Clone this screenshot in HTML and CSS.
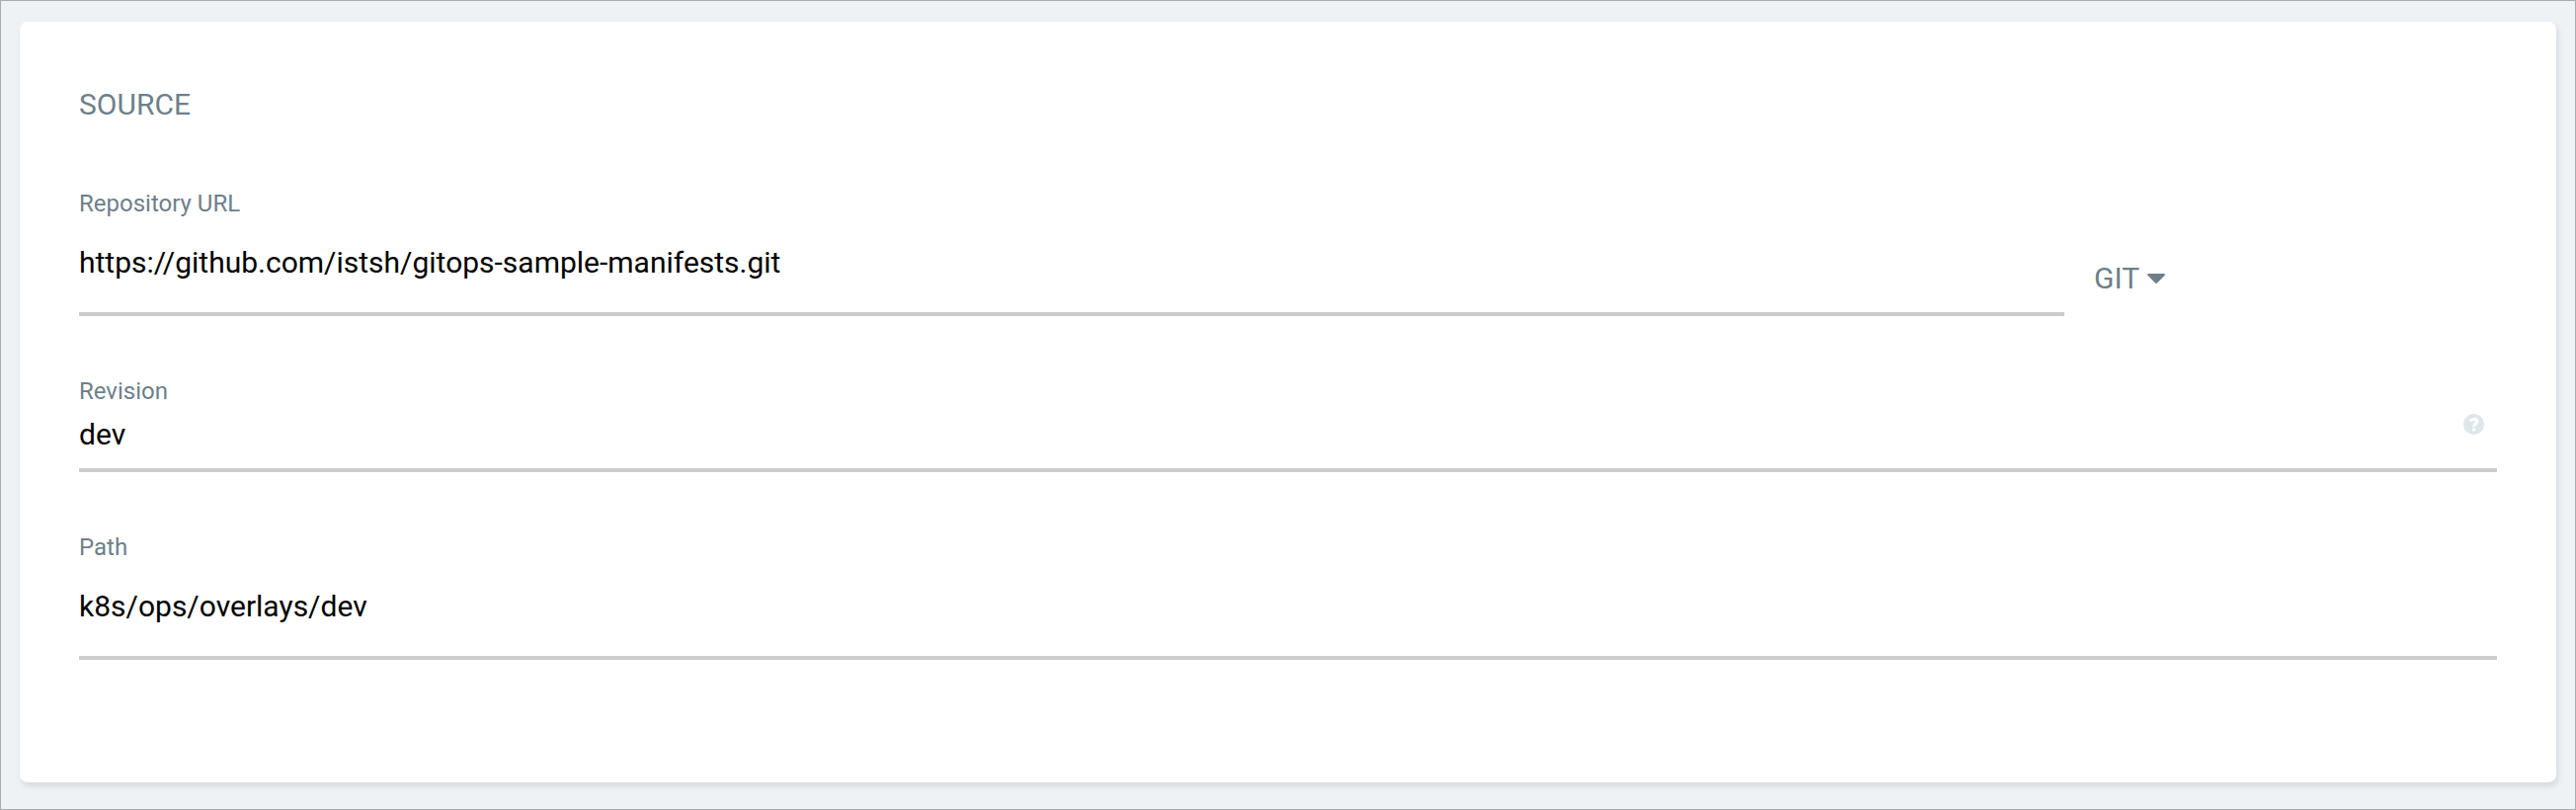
FILE: index.html
```html
<!DOCTYPE html>
<html lang="en">
<head>
    <meta charset="UTF-8">
    <title>Source</title>
    <link rel="stylesheet" href="styles.css">
</head>
<body>
    <form class="panel">
        <h1 class="panel-title">SOURCE</h1>

        <div class="row">
            <div class="field row-main">
                <label for="repo">Repository URL</label>
                <input type="text" id="repo" value="https://github.com/istsh/gitops-sample-manifests.git" spellcheck="false">
            </div>
            <div class="repo-type">
                <select id="type" aria-label="Repository type">
                    <option>GIT</option>
                </select>
                <svg class="caret" viewBox="0 0 18 10" aria-hidden="true">
                    <path d="M1.2 0h15.6c1 0 1.5 1.1.8 1.8L10 9.5c-.6.6-1.5.6-2 0L.4 1.8C-.3 1.1.2 0 1.2 0z"/>
                </svg>
            </div>
        </div>

        <div class="field compact">
            <label for="revision">Revision</label>
            <input type="text" id="revision" value="dev" spellcheck="false">
            <svg class="help" viewBox="0 0 512 512" aria-hidden="true">
                <circle cx="256" cy="256" r="256"/>
                <path class="help-mark" d="M168 178c22-36 50-52 88-52 46 0 82 28 82 68 0 62-80 56-80 108v6"/>
                <circle class="help-dot" cx="258" cy="386" r="44"/>
            </svg>
        </div>

        <div class="field">
            <label for="path">Path</label>
            <input type="text" id="path" value="k8s/ops/overlays/dev" spellcheck="false">
        </div>
    </form>
</body>
</html>
```
FILE: styles.css
```css
* {
    box-sizing: border-box;
}
body {
    margin: 0;
    min-height: 100vh;
    padding: 21px 19px 27px;
    border: 1px solid #a9adb0;
    background: #eef2f5;
    font-family: Roboto, sans-serif;
    font-size: 30px;
    line-height: 36px;
    color: #6d7f8b;
}
.panel {
    padding: 66px 60px 62px;
    background: #fff;
    border-radius: 8px;
    box-shadow: 2px 4px 6px rgba(0, 0, 0, 0.1);
}
.panel-title {
    margin: 0 0 68px;
    font-size: 30px;
    font-weight: 400;
}
.row {
    display: grid;
    grid-template-columns: 5fr 1fr;
}
.row-main {
    margin-right: 30px;
}
.field {
    position: relative;
    margin-bottom: 62px;
}
.field label {
    display: block;
    font-size: 24px;
    line-height: 28px;
}
.field input {
    display: block;
    width: 100%;
    height: 100px;
    padding: 27px 0 33px;
    border: none;
    border-bottom: 4px solid #ccc;
    outline: none;
    background: transparent;
    font: inherit;
    color: #000;
}
.field.compact input {
    height: 68px;
    padding: 11px 0 17px;
}
.repo-type {
    display: flex;
    align-items: center;
    gap: 7px;
    height: 36px;
    margin-top: 72px;
}
.repo-type select {
    appearance: none;
    padding: 0;
    border: none;
    outline: none;
    background: transparent;
    font: inherit;
    color: inherit;
    cursor: pointer;
}
.caret {
    width: 18px;
    height: 10px;
    fill: #6d7f8b;
}
.help {
    position: absolute;
    right: 13px;
    bottom: 38px;
    width: 21px;
    height: 21px;
    fill: #dee6eb;
}
.help-mark {
    fill: none;
    stroke: #fff;
    stroke-width: 72;
}
.help-dot {
    fill: #fff;
}
```
